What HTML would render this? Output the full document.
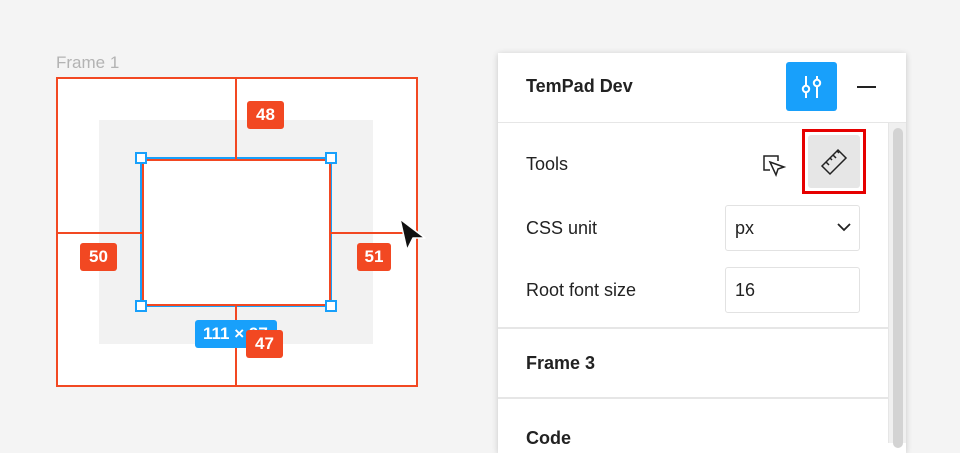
<!DOCTYPE html>
<html><head><meta charset="utf-8"><style>
*{box-sizing:border-box;margin:0;padding:0}
body{width:960px;height:443px;background:#f4f4f4;position:relative;overflow:hidden;font-family:"Liberation Sans",sans-serif}
.a{position:absolute}
.lbl{position:absolute;background:#f24822;color:#fff;font-size:17px;font-weight:bold;border-radius:3px;text-align:center;line-height:28px;height:28px}
.h{position:absolute;width:12px;height:12px;border:2px solid #18a0fb;background:#fff}
.t{position:absolute;font-size:18px;color:#222}
.b{position:absolute;font-size:18px;font-weight:bold;color:#222}
</style></head><body>
<div class="a" style="left:56px;top:53px;font-size:17px;color:#b3b3b3">Frame 1</div>
<div class="a" style="left:56px;top:77px;width:362px;height:310px;background:#fff;border:2px solid #f24822"></div>
<div class="a" style="left:99px;top:120px;width:274px;height:224px;background:#f2f2f2"></div>
<div class="a" style="left:140px;top:157px;width:192px;height:150px;background:#fff;border:2px solid #18a0fb"></div>
<div class="a" style="left:142px;top:159px;width:189px;height:147px;border:2px solid #f24822"></div>
<div class="a" style="left:235px;top:77px;width:2px;height:82px;background:#f24822"></div>
<div class="a" style="left:235px;top:305px;width:2px;height:81px;background:#f24822"></div>
<div class="a" style="left:57px;top:232px;width:85px;height:2px;background:#f24822"></div>
<div class="a" style="left:331px;top:232px;width:86px;height:2px;background:#f24822"></div>
<div class="h" style="left:135px;top:152px"></div><div class="h" style="left:325px;top:152px"></div>
<div class="h" style="left:135px;top:300px"></div><div class="h" style="left:325px;top:300px"></div>
<div class="a" style="left:195px;top:320px;width:82px;height:28px;background:#18a0fb;border-radius:3px;color:#fff;font-size:17px;font-weight:bold;line-height:28px;padding-left:8px">111 × 97</div>
<div class="lbl" style="left:247px;top:101px;width:37px">48</div>
<div class="lbl" style="left:80px;top:243px;width:37px">50</div>
<div class="lbl" style="left:357px;top:243px;width:34px">51</div>
<div class="lbl" style="left:246px;top:330px;width:37px">47</div>
<svg class="a" style="left:396px;top:216px" width="34" height="38" viewBox="0 0 34 38"><path d="M4 3 L29 22 L17 22 L11 34 Z" fill="#111" stroke="#fff" stroke-width="1.5" stroke-linejoin="round"/></svg>

<div class="a" style="left:498px;top:53px;width:408px;height:400px;background:#fff;box-shadow:0 1px 6px rgba(0,0,0,.18)"></div>
<div class="b" style="left:526px;top:76px;font-size:18px">TemPad Dev</div>
<div class="a" style="left:786px;top:62px;width:51px;height:49px;background:#18a0fb;border-radius:3px"></div>
<svg class="a" style="left:786px;top:62px" width="51" height="49"><g stroke="#fff" stroke-width="2" fill="none"><line x1="20" y1="14" x2="20" y2="23"/><circle cx="20" cy="27" r="3.2"/><line x1="20" y1="30" x2="20" y2="36"/><line x1="31" y1="14" x2="31" y2="17"/><circle cx="31" cy="21" r="3.2"/><line x1="31" y1="24" x2="31" y2="36"/></g></svg>
<div class="a" style="left:857px;top:86px;width:19px;height:2px;background:#222"></div>
<div class="a" style="left:498px;top:122px;width:408px;height:1px;background:#e6e6e6"></div>
<div class="a" style="left:888px;top:123px;width:18px;height:320px;background:#f0f0f0;border-left:1px solid #e6e6e6"></div>
<div class="a" style="left:893px;top:128px;width:10px;height:320px;background:#d3d3d3;border-radius:5px"></div>
<div class="t" style="left:526px;top:154px">Tools</div>
<svg class="a" style="left:760px;top:152px" width="28" height="28" viewBox="0 0 28 28"><g fill="none" stroke="#222" stroke-width="1.5"><path d="M10 18 H4 V4 H18 V9"/><path d="M10 10 L24 15 L18 17 L16 23 Z"/></g></svg>
<div class="a" style="left:802px;top:129px;width:64px;height:65px;border:3px solid #e60000"></div>
<div class="a" style="left:808px;top:135px;width:52px;height:53px;background:#e6e6e6;border-radius:3px"></div>
<svg class="a" style="left:808px;top:135px" width="52" height="53"><g fill="none" stroke="#222" stroke-width="1.5"><path d="M14 31 L30 15 L38 23 L22 39 Z"/><path d="M18 27 L21 30 M22 23 L24 25 M25 20 L28 23 M29 16 L31 18"/></g></svg>
<div class="t" style="left:526px;top:218px">CSS unit</div>
<div class="a" style="left:725px;top:205px;width:135px;height:46px;border:1px solid #e2e2e2;border-radius:3px"></div>
<div class="t" style="left:735px;top:218px">px</div>
<svg class="a" style="left:836px;top:220px" width="16" height="14"><path d="M2 4 L8 10 L14 4" fill="none" stroke="#222" stroke-width="1.8"/></svg>
<div class="t" style="left:526px;top:280px">Root font size</div>
<div class="a" style="left:725px;top:267px;width:135px;height:46px;border:1px solid #e2e2e2;border-radius:3px"></div>
<div class="t" style="left:735px;top:280px">16</div>
<div class="a" style="left:498px;top:327px;width:390px;height:1.5px;background:#e6e6e6"></div>
<div class="b" style="left:526px;top:353px">Frame 3</div>
<div class="a" style="left:498px;top:397px;width:390px;height:1.5px;background:#e6e6e6"></div>
<div class="b" style="left:526px;top:428px">Code</div>
</body></html>
